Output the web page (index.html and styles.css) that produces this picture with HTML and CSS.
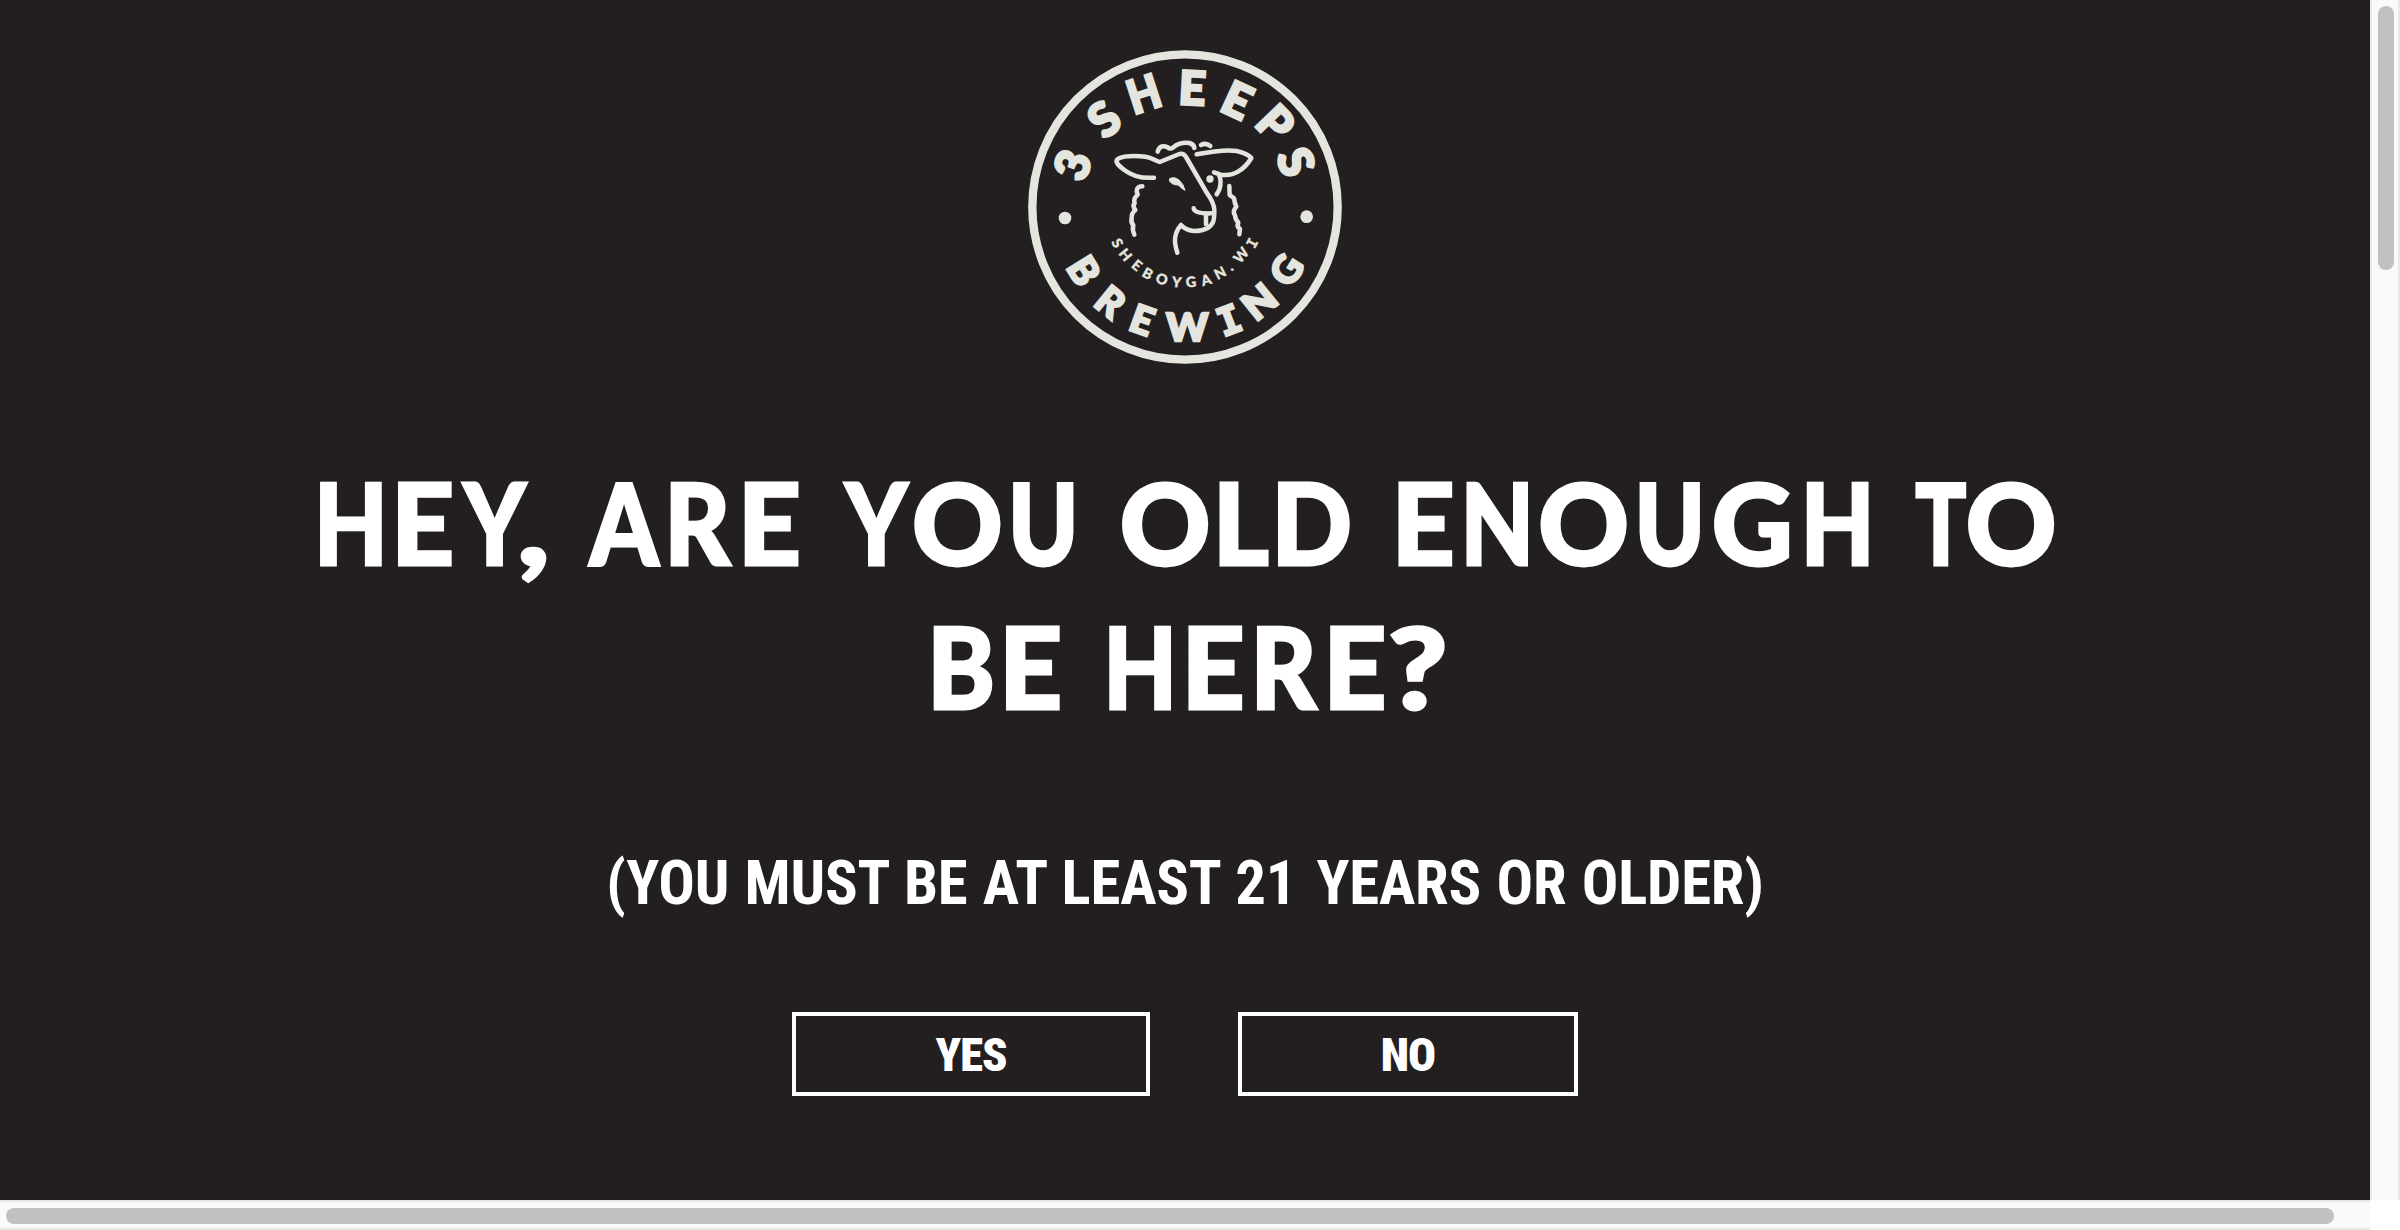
FILE: index.html
```html
<!DOCTYPE html>
<html lang="en">
<head>
<meta charset="utf-8">
<title>3 Sheeps Brewing</title>
<link rel="stylesheet" href="styles.css">
</head>
<body>
<div class="window">
  <main class="gate">
    <svg class="logo" viewBox="0 0 1050 1020" role="img" aria-label="3 Sheeps Brewing, Sheboygan WI">
      <circle class="ring" cx="525" cy="501" r="458"/>
      <circle class="dot" cx="165" cy="534" r="19"/>
      <circle class="dot" cx="890" cy="530" r="19"/>
      <g class="top">
        <text y="51" transform="translate(187 375) rotate(-69.6)">3</text>
        <text y="51" transform="translate(282 237) rotate(-40)">S</text>
        <text y="51" transform="translate(401 161) rotate(-18)" textLength="96" lengthAdjust="spacingAndGlyphs">H</text>
        <text y="51" transform="translate(547 143) rotate(3)">E</text>
        <text y="51" transform="translate(682 180) rotate(25)">E</text>
        <text y="51" transform="translate(797 250) rotate(46)">P</text>
        <text y="51" transform="translate(858 365) rotate(70)">S</text>
      </g>
      <g class="bottom">
        <text y="42" transform="translate(222 692) rotate(58)">B</text>
        <text y="42" transform="translate(302 785) rotate(39)">R</text>
        <text y="42" transform="translate(397 840) rotate(20)">E</text>
        <text y="42" transform="translate(532 862)" textLength="126" lengthAdjust="spacingAndGlyphs">W</text>
        <text class="slab" y="42" transform="translate(657 840) rotate(-21)">I</text>
        <text y="42" transform="translate(748 785) rotate(-39)" textLength="96" lengthAdjust="spacingAndGlyphs">N</text>
        <text y="42" transform="translate(830 690) rotate(-58)">G</text>
      </g>
      <g class="town">
        <text y="16" transform="translate(323 609) rotate(62)">S</text>
        <text y="16" transform="translate(347 644) rotate(51)">H</text>
        <text y="16" transform="translate(381 675) rotate(40)">E</text>
        <text y="16" transform="translate(413 700) rotate(29)">B</text>
        <text y="16" transform="translate(456 717) rotate(18)">O</text>
        <text y="16" transform="translate(500 726) rotate(6)">Y</text>
        <text y="16" transform="translate(543 725) rotate(-5)">G</text>
        <text y="16" transform="translate(588 719) rotate(-16)">A</text>
        <text y="16" transform="translate(630 698) rotate(-27)">N</text>
        <text y="4" transform="translate(666 688) rotate(-37)">.</text>
        <text y="16" transform="translate(693 645) rotate(-49)">W</text>
        <text class="slab" y="16" transform="translate(726 609) rotate(-61)">I</text>
      </g>
      <g class="sheep">
        <path d="M432 413C395 416 365 407 342 389C325 376 316 367 321 359C331 346 380 347 407 350C425 353 435 361 449 366L508 342Q521 339 528 351L590 458Q612 488 613 510C613 540 611 552 595 563Q577 573 551 573Q526 570 513 555C498 572 494 587 495 606Q497 624 502 638"/>
        <path d="M443 335C447 320 458 314 473 322Q480 329 490 322C505 309 520 307 538 309Q552 313 553 324M573 315Q588 307 601 318"/>
        <path d="M560 343C601 335 646 327 680 333Q712 340 724 354Q708 381 684 395C665 407 648 406 632 404L612 397M627 404Q636 423 628 449L620 463"/>
        <path d="M397 439Q379 440 380 453L383 464Q369 475 374 489Q366 499 376 510Q364 520 365 534Q362 547 370 556Q366 568 373 584"/>
        <path d="M658 438L659 465L672 475Q674 490 679 500Q666 514 675 526Q676 539 685 548Q679 560 690 567L688 583"/>
        <path d="M551 505Q553 522 603 520M588 520V553"/>
        <path class="eye" d="M480 415Q493 409 506 419Q521 432 525 451Q515 447 505 435Q488 436 479 424Z"/>
        <circle class="dot" cx="600" cy="417" r="11"/>
      </g>
    </svg>
    <h1 class="question">
      <svg class="lettering" viewBox="0 0 2370 320">
        <text y="125"><tspan x="314.1" textLength="73.8" lengthAdjust="spacingAndGlyphs">H</tspan><tspan x="391" textLength="63.2" lengthAdjust="spacingAndGlyphs">E</tspan><tspan x="463.3" textLength="62.7" lengthAdjust="spacingAndGlyphs">Y</tspan><tspan x="517.1" textLength="33" lengthAdjust="spacingAndGlyphs">,</tspan> <tspan x="589.6" textLength="69.1" lengthAdjust="spacingAndGlyphs">A</tspan><tspan x="664.3" textLength="66.1" lengthAdjust="spacingAndGlyphs">R</tspan><tspan x="737.7" textLength="63.2" lengthAdjust="spacingAndGlyphs">E</tspan> <tspan x="845" textLength="62.7" lengthAdjust="spacingAndGlyphs">Y</tspan><tspan x="911.9">O</tspan><tspan x="1008" textLength="70.5" lengthAdjust="spacingAndGlyphs">U</tspan> <tspan x="1119.7">O</tspan><tspan x="1212.7" textLength="56.1" lengthAdjust="spacingAndGlyphs">L</tspan><tspan x="1271.2" textLength="80.8" lengthAdjust="spacingAndGlyphs">D</tspan> <tspan x="1391.6" textLength="63.2" lengthAdjust="spacingAndGlyphs">E</tspan><tspan x="1460.4" textLength="73.5" lengthAdjust="spacingAndGlyphs">N</tspan><tspan x="1538.2">O</tspan><tspan x="1634.4" textLength="70.5" lengthAdjust="spacingAndGlyphs">U</tspan><tspan x="1711.8">G</tspan><tspan x="1800.8" textLength="73.8" lengthAdjust="spacingAndGlyphs">H</tspan> <tspan x="1915.2" textLength="51.1" lengthAdjust="spacingAndGlyphs">T</tspan><tspan x="1965.7">O</tspan></text>
        <text y="269"><tspan x="927.2" textLength="67.7" lengthAdjust="spacingAndGlyphs">B</tspan><tspan x="998.9" textLength="63.2" lengthAdjust="spacingAndGlyphs">E</tspan> <tspan x="1103.3" textLength="73.8" lengthAdjust="spacingAndGlyphs">H</tspan><tspan x="1181.5" textLength="63.2" lengthAdjust="spacingAndGlyphs">E</tspan><tspan x="1250.4" textLength="66.1" lengthAdjust="spacingAndGlyphs">R</tspan><tspan x="1323.3" textLength="63.2" lengthAdjust="spacingAndGlyphs">E</tspan><tspan x="1387.8" textLength="60" lengthAdjust="spacingAndGlyphs">?</tspan></text>
      </svg>
    </h1>
    <p class="note">(YOU MUST BE AT LEAST <span class="age">21</span> YEARS OR OLDER)</p>
    <div class="choices">
      <button class="choice yes">YES</button>
      <button class="choice no">NO</button>
    </div>
  </main>
  <div class="bar vertical"><div class="thumb"></div></div>
  <div class="bar horizontal"><div class="thumb"></div></div>
</div>
</body>
</html>
```
FILE: styles.css
```css
* { box-sizing: border-box; }
body { margin: 0; background: #fff; overflow: hidden; }
.window { display: grid; grid-template: 1200px 30px / 2370px 30px; }
.gate {
  display: flex;
  flex-direction: column;
  align-items: center;
  padding-top: 40px;
  background: #231f20;
  color: #fff;
  font-family: Roboto, "Liberation Sans", sans-serif;
  font-stretch: 75%;
}
.logo { display: block; flex: none; width: 350px; height: 340px; fill: #e5e5df; }
.ring { fill: none; stroke: #e5e5df; stroke-width: 25; }
.logo text { font-family: Lato, sans-serif; font-weight: 900; text-anchor: middle; stroke: #e5e5df; }
.top text { font-size: 140px; stroke-width: 8; }
.bottom text { font-size: 116px; stroke-width: 7; }
.town text { font-size: 43px; stroke-width: 1; }
.logo .slab { font-family: "DejaVu Sans Mono", monospace; font-weight: 700; }
.sheep { fill: none; stroke: #e5e5df; stroke-width: 13.5; stroke-linecap: round; stroke-linejoin: round; }
.sheep .eye { fill: #e5e5df; stroke-width: 3; }
.sheep .dot { fill: #e5e5df; stroke: none; }
.question { margin: 60px 0 0; height: 320px; }
.lettering { display: block; width: 2370px; height: 320px; }
.lettering text {
  font: 900 112px Lato, sans-serif;
  fill: #fff;
  stroke: #fff;
  stroke-width: 2.8;
}
.note {
  margin: 89px 0 0;
  font-size: 60.8px;
  font-weight: 700;
  line-height: 70px;
  letter-spacing: -0.2px;
  word-spacing: 1.5px;
  white-space: nowrap;
}
.age { margin-right: 5px; }
.choices { display: flex; gap: 88px; margin-top: 93px; }
.choice {
  height: 84px;
  padding: 1px 0 0;
  border: 4px solid #fff;
  background: none;
  color: #fff;
  font-family: inherit;
  font-size: 46.5px;
  font-weight: 900;
  font-stretch: 75%;
  letter-spacing: -1px;
}
.yes { width: 358px; }
.no { width: 340px; }
.bar { background: #fafafa; border: 0 solid #e9e8e9; }
.bar .thumb { border-radius: 8px; background: #c1c1c1; }
.vertical { border-width: 0 2px; padding: 6px 4px 0 6px; }
.vertical .thumb { width: 16px; height: 264px; }
.horizontal { border-width: 2px 0; padding: 6px 0 0 6px; }
.horizontal .thumb { width: 2328px; height: 16px; }
```
